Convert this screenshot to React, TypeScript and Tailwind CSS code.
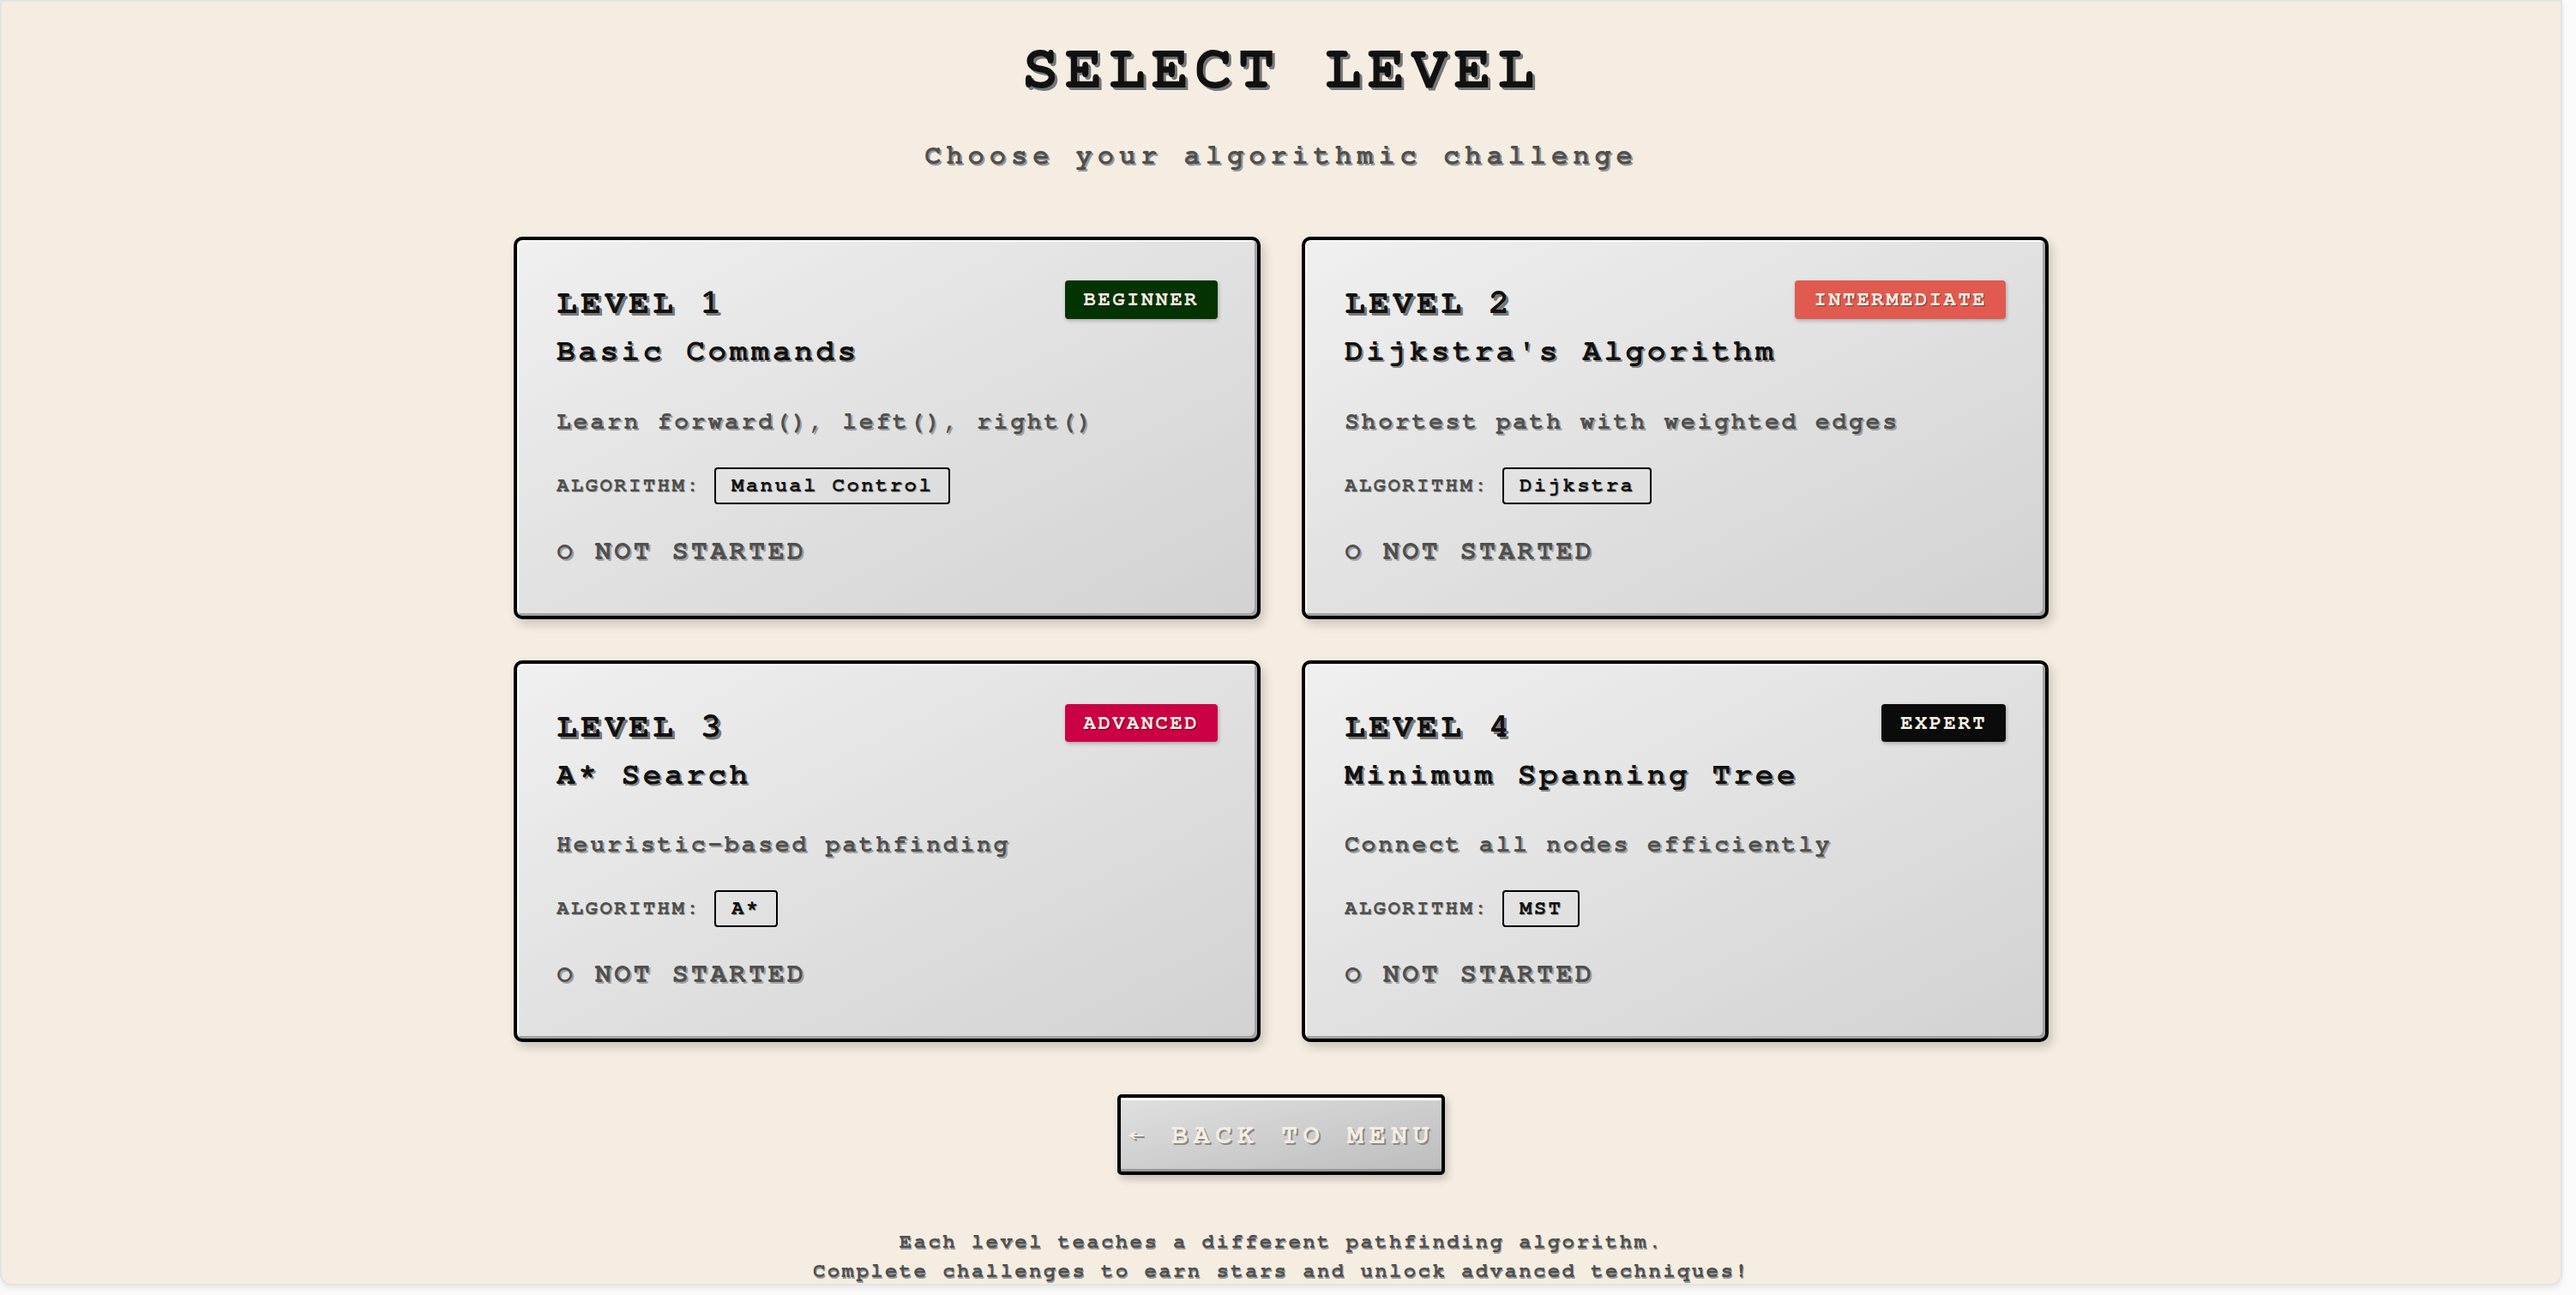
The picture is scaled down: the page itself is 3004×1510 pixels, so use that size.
import React from "react";

type Level = {
  num: number;
  name: string;
  desc: string;
  algo: string;
  badge: string;
  badgeClass: string;
};

const LEVELS: Level[] = [
  {
    num: 1,
    name: "Basic Commands",
    desc: "Learn forward(), left(), right()",
    algo: "Manual Control",
    badge: "BEGINNER",
    badgeClass: "bg-[#033300]",
  },
  {
    num: 2,
    name: "Dijkstra's Algorithm",
    desc: "Shortest path with weighted edges",
    algo: "Dijkstra",
    badge: "INTERMEDIATE",
    badgeClass: "bg-[#e05a50]",
  },
  {
    num: 3,
    name: "A* Search",
    desc: "Heuristic-based pathfinding",
    algo: "A*",
    badge: "ADVANCED",
    badgeClass: "bg-[#cc0044]",
  },
  {
    num: 4,
    name: "Minimum Spanning Tree",
    desc: "Connect all nodes efficiently",
    algo: "MST",
    badge: "EXPERT",
    badgeClass: "bg-[#0b0b0b]",
  },
];

function LevelCard({ level }: { level: Level }) {
  return (
    <div className="border-4 border-black rounded-[10px] px-[46px] pt-[47px] pb-[52px] bg-gradient-to-br from-[#f0f0f0] to-[#d2d2d2] shadow-[inset_2px_2px_0_#ffffff,inset_-3px_-3px_0_#a3a3a3,4px_6px_12px_rgba(0,0,0,0.18)]">
      <div className="flex items-start justify-between">
        <div className="text-[40px] leading-[1.3] tracking-[0.1em] text-[#111] [text-shadow:3px_3px_0_#777]">
          LEVEL {level.num}
        </div>
        <span
          className={`${level.badgeClass} px-[22px] py-2 text-[24px] leading-[1.2] tracking-[0.1em] text-[#f5ede1] rounded-[4px] shadow-[1px_2px_4px_rgba(0,0,0,0.25)] [text-shadow:1px_1px_0_rgba(0,0,0,0.45)]`}
        >
          {level.badge}
        </span>
      </div>
      <div className="mt-[5px] text-[36px] leading-[1.4] tracking-[0.1em] text-[#111] [text-shadow:2px_2px_0_#888]">
        {level.name}
      </div>
      <p className="mt-[36px] text-[28px] leading-[1.5] tracking-[0.1em] text-[#4f4f4f] [text-shadow:2px_2px_0_#a0a0a0]">
        {level.desc}
      </p>
      <div className="mt-[32px] flex items-center gap-4">
        <span className="text-[24px] tracking-[0.1em] text-[#4f4f4f] [text-shadow:1px_1px_0_#a0a0a0]">ALGORITHM:</span>
        <span className="border-2 border-black rounded-[4px] px-[18px] py-[5px] text-[24px] leading-[1.2] tracking-[0.1em] text-[#111] [text-shadow:1px_1px_0_#999]">
          {level.algo}
        </span>
      </div>
      <div className="mt-[30px] text-[32px] leading-[1.5] tracking-[0.1em] text-[#4f4f4f] [text-shadow:2px_2px_0_#a0a0a0]">
        ○ NOT STARTED
      </div>
    </div>
  );
}

export default function App() {
  return (
    <div className="min-h-screen bg-[#fafafa] font-['Nimbus_Mono_PS','Nimbus_Mono_L','FreeMono','Courier_10_Pitch','Liberation_Mono',monospace] font-bold">
      <div className="w-[2988px] h-[1499px] overflow-hidden bg-[#f5ede1] border-2 border-[#e3e3e3] rounded-b-[14px] shadow-[0_3px_6px_rgba(0,0,0,0.08)] flex flex-col items-center pt-[42px]">
        <h1 className="text-[72px] leading-none tracking-[0.1em] text-[#111] [text-shadow:3px_3px_0_#777]">
          SELECT LEVEL
        </h1>
        <p className="mt-[46px] text-[32px] leading-[1.2] tracking-[6px] text-[#4f4f4f] [text-shadow:2px_2px_0_#999]">
          Choose your algorithmic challenge
        </p>

        <div className="mt-[76px] w-[1790px] grid grid-cols-2 gap-[48px]">
          {LEVELS.map((level) => (
            <LevelCard key={level.num} level={level} />
          ))}
        </div>

        <button className="mt-[61px] border-4 border-black rounded-[5px] px-2 py-6 text-[32px] leading-[1.2] tracking-[0.2em] text-[#f5ede1] bg-gradient-to-br from-[#e0e0e0] to-[#bdbdbd] shadow-[inset_0_3px_0_#ffffff,inset_0_-3px_0_#999,3px_5px_10px_rgba(0,0,0,0.2)] [text-shadow:2px_2px_0_#8a8a8a]">
          ← BACK TO MENU
        </button>

        <div className="mt-[62px] text-center text-[24px] leading-[1.4] tracking-[0.1em] text-[#4f4f4f] [text-shadow:1px_2px_0_#999]">
          <p>Each level teaches a different pathfinding algorithm.</p>
          <p>Complete challenges to earn stars and unlock advanced techniques!</p>
        </div>
      </div>
    </div>
  );
}
